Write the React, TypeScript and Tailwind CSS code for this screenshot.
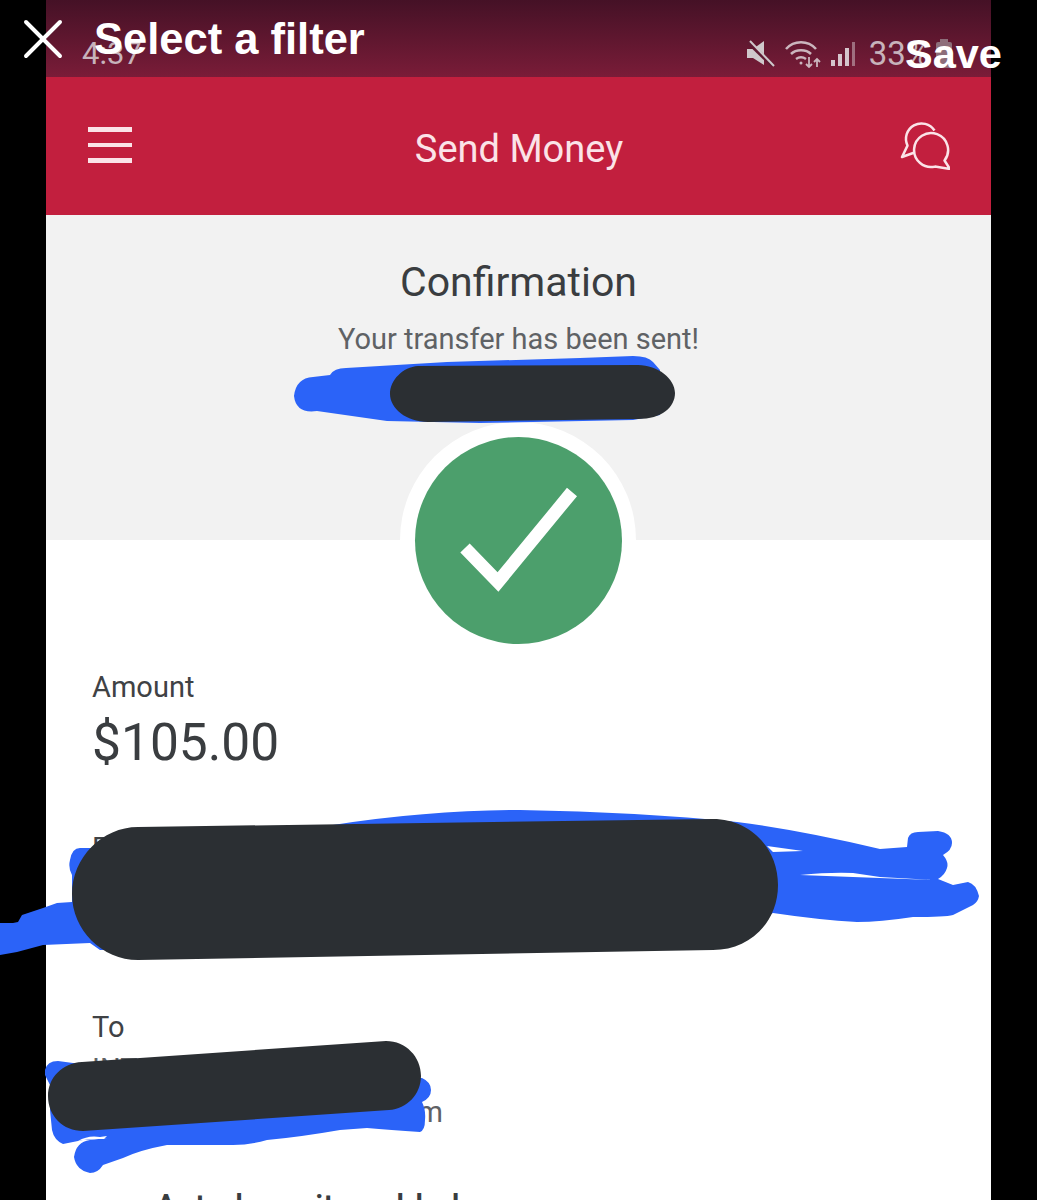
import { X } from "lucide-react";

const font = "font-['Roboto',sans-serif]";

function Scribbles() {
  return (
    <svg className="absolute left-0 top-0 pointer-events-none" width={1037} height={1200} viewBox="0 0 1037 1200">
      {/* blue marker */}
      <path
        fill="#2b63f8"
        d="M294 396Q296 378 313 377L330 375Q334 368 346 368L447 362L580 358L633 356Q648 356 653 362L660 370L660 415L633 420L480 423L387 421L380 420L317 411Q296 414 294 396Z"
      />
      <path
        fill="#2b63f8"
        d="M0 923L13 923L18 922L22 915L43 908L57 903L72 902L72 875Q68 868 70 860Q72 848 80 848L100 848L333 825Q430 810 520 810Q640 812 737 822Q800 830 880 849L907 847L908 838Q910 832 918 832L938 831Q952 833 952 843Q952 850 943 855Q949 862 947 868Q945 875 938 879L953 885L968 882Q976 884 979 896Q978 902 973 905L953 915Q945 917 913 917Q880 922 857 922Q820 920 773 913L700 950L100 950L90 943L43 945L17 952L0 955Z"
      />
      <path fill="#ffffff" d="M767 846L803 851L773 852Z M800 875Q830 872 853 873L880 877L933 880L853 877Z" />
      <path
        fill="#2b63f8"
        d="M45 1070Q47 1061 58 1061L73 1063L422 1078Q431 1082 431 1090Q431 1098 422 1102Q426 1110 425 1120Q425 1130 420 1132Q390 1130 367 1128L340 1130Q300 1137 267 1140Q250 1145 233 1145L167 1145Q140 1150 123 1158L103 1165Q98 1173 90 1173Q76 1170 74 1157Q76 1142 90 1140L107 1138L83 1140L63 1144Q54 1140 52 1130L50 1110L50 1085L45 1075Z"
      />
      <path fill="#ffffff" d="M78 1141Q88 1135 100 1137L107 1136L104 1139L90 1139Z" />
      {/* dark marker */}
      <path fill="#2b2f33" d="M418 366l220-1c20 0 37 14 37 28 0 14-13 26-37 26l-210 3c-22 0-38-14-38-28 0-14 13-27 28-28z" />
      <path fill="#2b2f33" d="M138 827l575-8c36 0 65 28 65 66 0 38-29 65-65 65l-575 10c-36 0-66-30-66-66 0-36 30-67 66-67z" />
      <path fill="#2b2f33" d="M82 1062l304-21c20 0 35 16 35 35 0 18-14 33-32 34l-306 21c-20 0-35-15-35-35 0-18 14-33 34-34z" />
    </svg>
  );
}

export default function App() {
  return (
    <div className={`relative h-[1200px] w-[1037px] overflow-hidden bg-black ${font}`}>
      <div className="mx-[46px] flex h-full w-[945px] flex-col bg-white">
        {/* phone status bar */}
        <div className="flex h-[77px] shrink-0 items-end justify-between bg-gradient-to-b from-[#451126] to-[#7a1c38] pb-[6px] pl-[36px] pr-[37px] text-[#c7b3bb]">
          <span className="text-[31px] leading-[34px]">4:37</span>
          <div className="flex items-center">
            <svg width="28" height="28" viewBox="0 0 28 28" className="mr-[10px]" fill="#cfc8cb">
              <path d="M0 9h6L17 1v24L6 18H0z" />
              <path d="M1 2l25 24" stroke="#5f1a32" strokeWidth="4" />
              <path d="M3 1l24 25" stroke="#cfc8cb" strokeWidth="2" />
            </svg>
            <svg width="37" height="28" viewBox="0 0 37 28" fill="none" stroke="#cbb6be" strokeWidth="2.5" className="mr-[8px]">
              <path d="M1 9c8-9 22-9 30 0M6 14c5-5 15-5 20 0M11 19c3-2 7-2 10 0" />
              <circle cx="16" cy="23" r="1.5" fill="#cbb6be" stroke="none" />
              <path d="M24 17v10m-3-3l3 3 3-3M32 27V19m-3 3l3-3 3 3" strokeWidth="1.8" />
            </svg>
            <svg width="26" height="28" viewBox="0 0 26 28" fill="#d6c5cc" className="mr-[13px]">
              <rect x="1" y="20" width="4" height="6" />
              <rect x="8" y="14" width="4" height="12" />
              <rect x="15" y="8" width="4" height="18" />
              <rect x="22" y="2" width="3" height="24" opacity="0.5" />
            </svg>
            <span className="text-[33px] leading-[34px]">33%</span>
            <svg width="20" height="30" viewBox="0 0 20 30" className="ml-[4px]" fill="#8d6e7a">
              <rect x="6" y="0" width="8" height="4" />
              <rect x="2" y="3" width="16" height="26" rx="2" />
            </svg>
          </div>
        </div>

        {/* app header */}
        <div className="flex h-[138px] shrink-0 items-center justify-between bg-[#c21f3e] pl-[42px] pr-[41px]">
          <div className="mb-[2px] flex w-[44px] flex-col gap-[11px]">
            <div className="h-[4.5px] bg-[#fbe3e8]" />
            <div className="h-[4.5px] bg-[#fbe3e8]" />
            <div className="h-[4.5px] bg-[#fbe3e8]" />
          </div>
          <span className="ml-[6px] mt-[6px] text-[38px] text-[#fbe3e8]">Send Money</span>
          <svg width="50" height="50" viewBox="0 0 50 50" className="mb-[2px]" fill="none" stroke="#fbe3e8" strokeWidth="2.5" strokeLinejoin="round">
            <path d="M34.5 10.5A15.5 15.5 0 0 0 7.5 25.6L2 37L14.5 32.5" />
            <path d="M44.5 40.5A17 17 0 1 0 35 46.6L50 49Z" />
          </svg>
        </div>

        {/* confirmation */}
        <div className="flex h-[325px] shrink-0 flex-col items-center bg-[#f2f2f2] pt-[42px]">
          <h1 className="text-[41px] leading-[50px] text-[#3a3d40]">Confirmation</h1>
          <p className="mt-[12px] text-[29px] leading-[40px] text-[#5f6265]">Your transfer has been sent!</p>
        </div>

        <div className="relative flex flex-1 flex-col pl-[46px]">
          <div className="absolute left-[354px] top-[-118px] size-[236px] rounded-full bg-white" />
          <div className="absolute left-[369px] top-[-103px] size-[207px] rounded-full bg-[#4c9f6c]">
            <svg width="207" height="207" viewBox="0 0 207 207" fill="none" stroke="#fff" strokeWidth="13">
              <path d="M50 111l33 34 74-90" />
            </svg>
          </div>

          <p className="mt-[130px] text-[29px] leading-[34px] text-[#3f4245]">Amount</p>
          <p className="mt-[8px] text-[51.5px] leading-[62px] text-[#3a3d40]">$105.00</p>
          <p className="mt-[57px] text-[29px] leading-[34px] text-[#3f4245]">From</p>
          <p className="mt-[145px] text-[29px] leading-[34px] text-[#3f4245]">To</p>
          <p className="mt-[8px] text-[29px] leading-[34px] text-[#5f6265]">INTERAC</p>
          <p className="mt-[9px] w-[351px] text-right text-[29px] leading-[34px] text-[#5f6265]">.com</p>
          <p className="ml-[63px] mt-[58px] text-[33px] font-medium leading-[40px] text-[#3a3d40]">Autodeposit enabled</p>
        </div>
      </div>

      <Scribbles />

      {/* filter screen chrome, laid over the screenshot */}
      <X className="absolute left-[9px] top-[5px] text-white" size={68} strokeWidth={1.4} />
      <span className="absolute left-[94px] top-[15px] font-['Liberation_Sans',sans-serif] text-[43.5px] font-bold leading-[48px] text-white">Select a filter</span>
      <span className="absolute left-[905px] top-[30px] font-['Liberation_Sans',sans-serif] text-[41.5px] font-bold leading-[48px] text-white">Save</span>
    </div>
  );
}
